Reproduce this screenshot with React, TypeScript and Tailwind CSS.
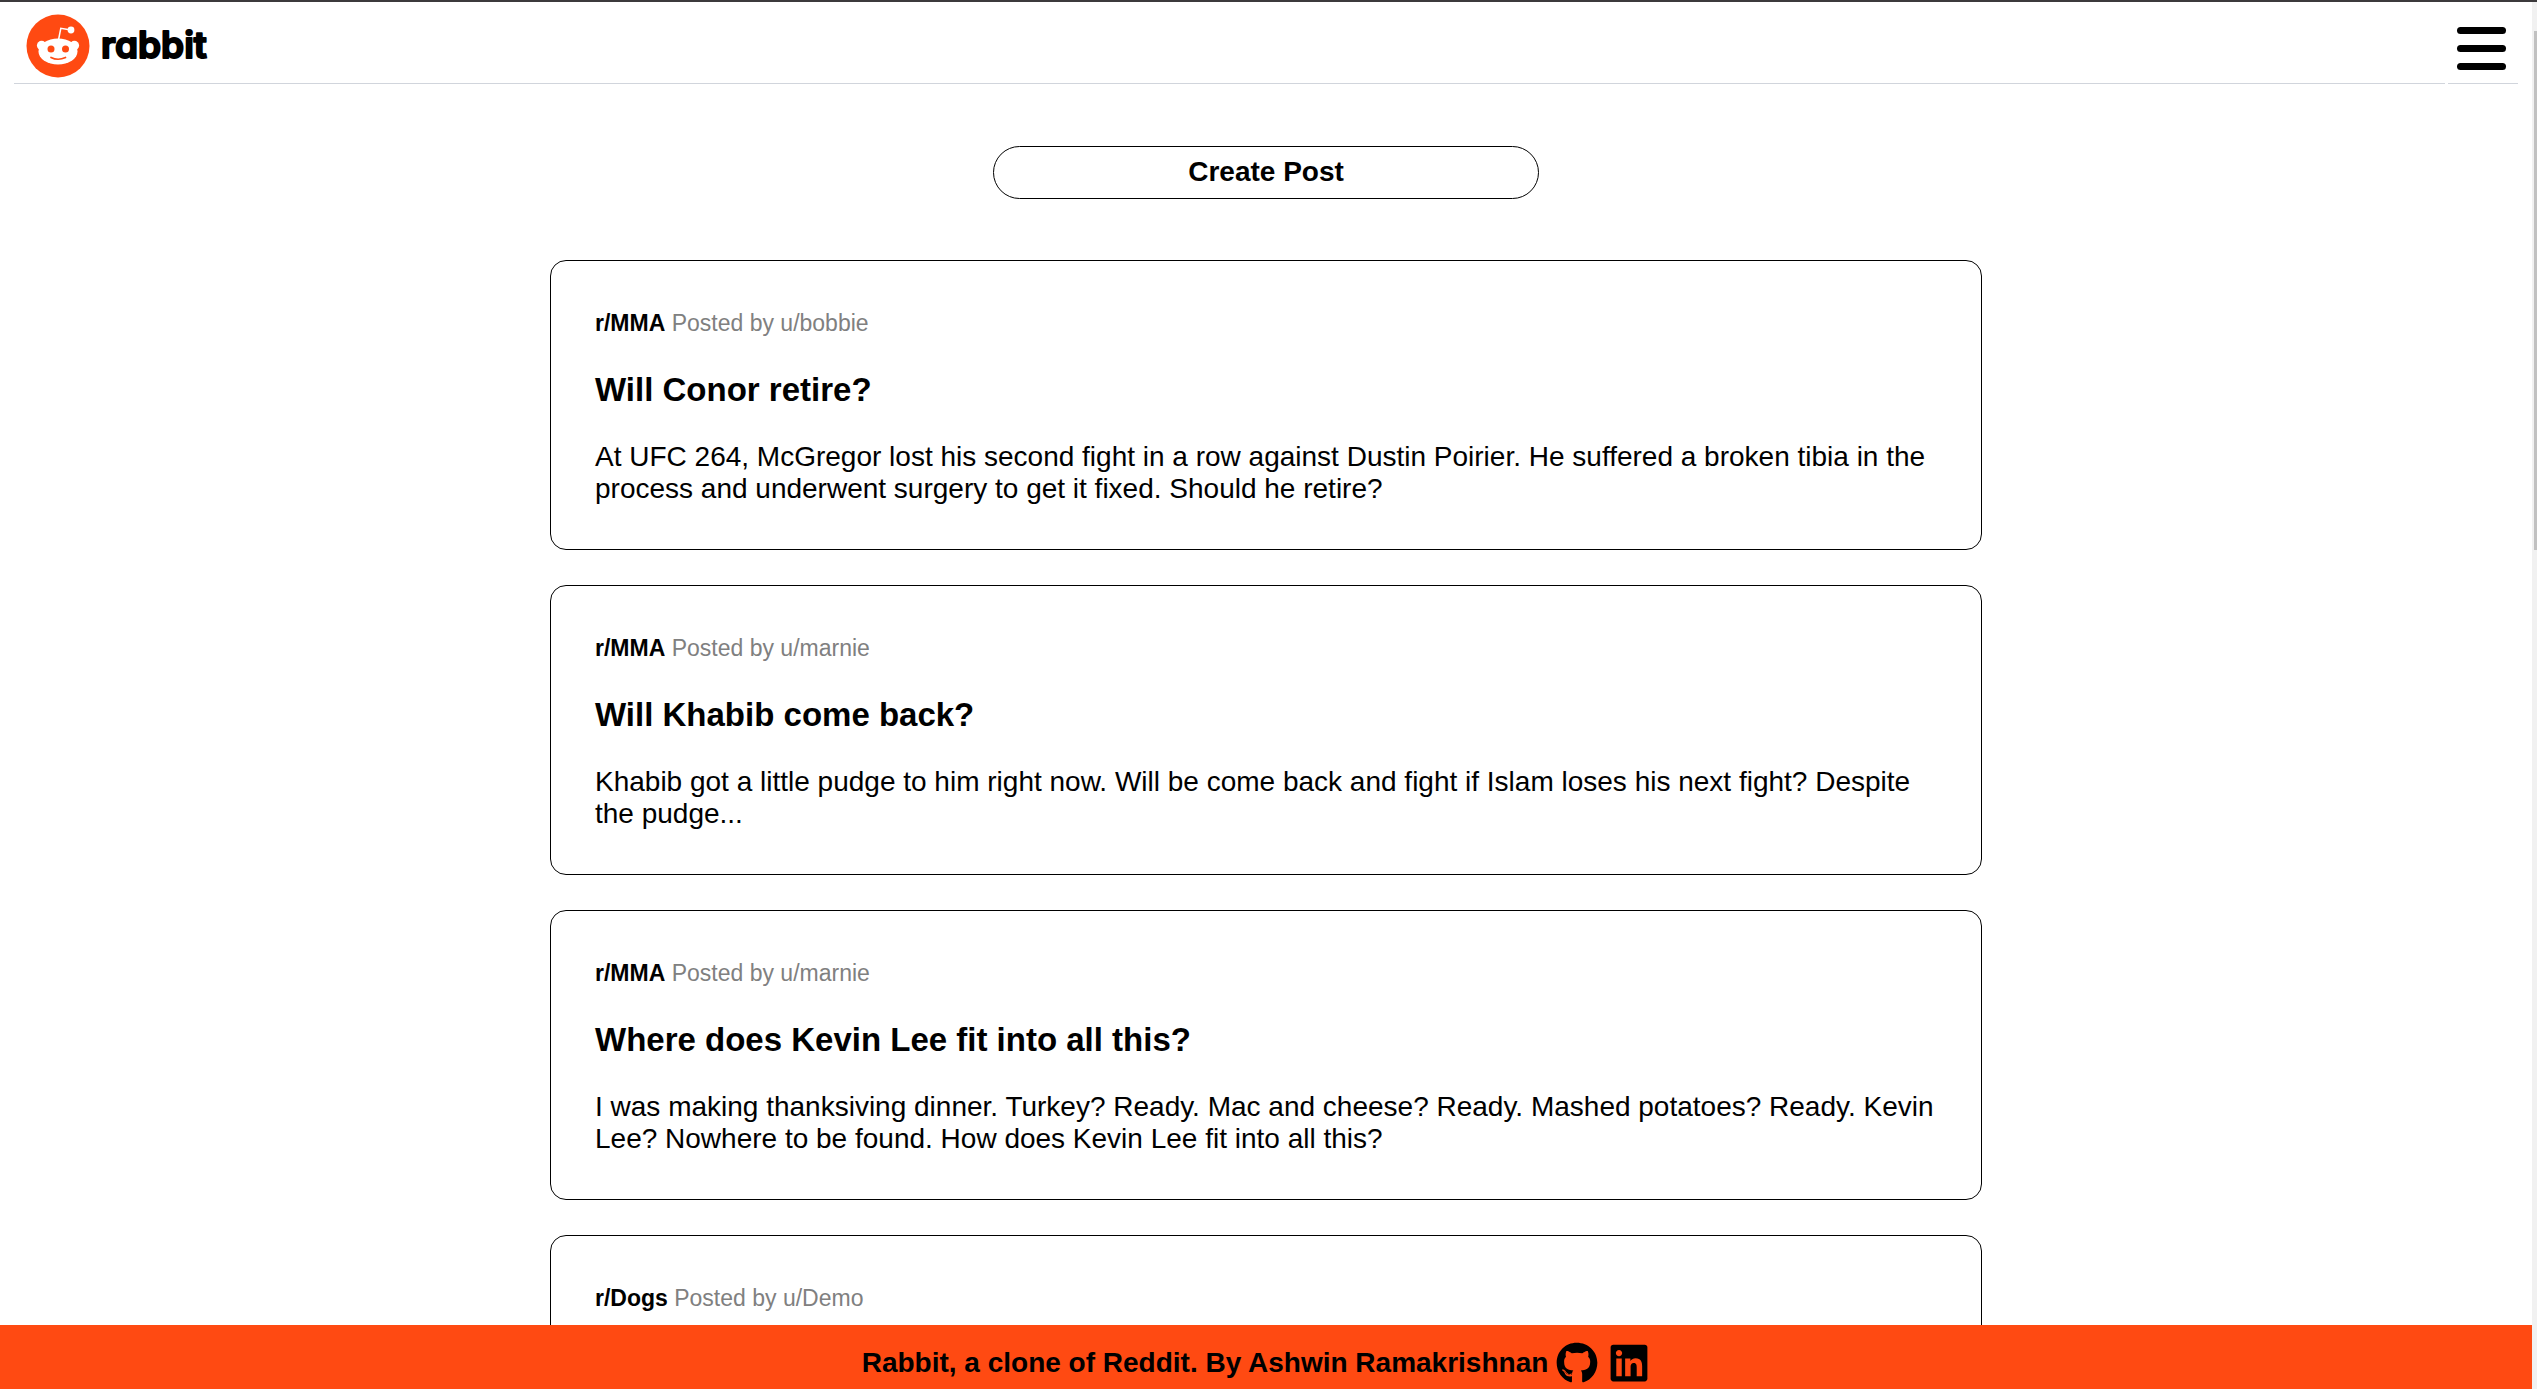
import { FaGithub, FaLinkedin } from "react-icons/fa";

type PostData = {
  community: string;
  author: string;
  title?: string;
  body?: string;
};

const posts: PostData[] = [
  {
    community: "r/MMA",
    author: "u/bobbie",
    title: "Will Conor retire?",
    body: "At UFC 264, McGregor lost his second fight in a row against Dustin Poirier. He suffered a broken tibia in the process and underwent surgery to get it fixed. Should he retire?",
  },
  {
    community: "r/MMA",
    author: "u/marnie",
    title: "Will Khabib come back?",
    body: "Khabib got a little pudge to him right now. Will be come back and fight if Islam loses his next fight? Despite the pudge...",
  },
  {
    community: "r/MMA",
    author: "u/marnie",
    title: "Where does Kevin Lee fit into all this?",
    body: "I was making thanksiving dinner. Turkey? Ready. Mac and cheese? Ready. Mashed potatoes? Ready. Kevin Lee? Nowhere to be found. How does Kevin Lee fit into all this?",
  },
  { community: "r/Dogs", author: "u/Demo" },
];

function RabbitMark() {
  return (
    <svg viewBox="0 0 64 64" className="size-16" aria-hidden="true">
      <circle cx="32" cy="32" r="31.5" fill="#ff4a12" />
      <path d="M32.500 26 L34.800 14.300 L45 16" fill="none" stroke="#fff" strokeWidth="1.5" />
      <circle cx="45" cy="16" r="3.4" fill="#fff" />
      <circle cx="15.600" cy="31.500" r="4.700" fill="#fff" />
      <circle cx="48.400" cy="31.500" r="4.700" fill="#fff" />
      <ellipse cx="32" cy="37.500" rx="19.500" ry="13" fill="#fff" />
      <circle cx="25" cy="35" r="3.5" fill="#ff4a12" />
      <circle cx="39.500" cy="35" r="3.5" fill="#ff4a12" />
      <path d="M25 43.500 Q32 47 39.500 43.500" fill="none" stroke="#ff4a12" strokeWidth="1.7" strokeLinecap="round" />
    </svg>
  );
}

function Header() {
  return (
    <header className="flex h-[82px] gap-[3px] px-3.5">
      <div className="flex flex-1 items-center border-b border-gray-300 pt-1.5 pl-3">
        <a href="#" className="flex items-center gap-2.5">
          <RabbitMark />
          <svg width="120" height="56" aria-label="rabbit">
            <text
              x="1"
              y="40"
              className="fill-black stroke-black stroke-2 font-['Inter',sans-serif] text-[37px] font-semibold [font-feature-settings:'cv11'] [stroke-linejoin:round]"
            >
              rabbit
            </text>
          </svg>
        </a>
      </div>
      <div className="flex w-[70px] items-center justify-center border-b border-gray-300 pt-3 pr-1">
        <button type="button" aria-label="Menu" className="flex flex-col gap-[11px]">
          <span className="h-[7px] w-[49px] rounded-full bg-black" />
          <span className="h-[7px] w-[49px] rounded-full bg-black" />
          <span className="h-[7px] w-[49px] rounded-full bg-black" />
        </button>
      </div>
    </header>
  );
}

function Post({ post }: { post: PostData }) {
  return (
    <article className="rounded-2xl border border-black px-11 pt-[46px] pb-11">
      <p className="text-[23px] leading-8">
        <a href="#" className="font-bold">{post.community}</a>{" "}
        <span className="text-[#808080]">Posted by {post.author}</span>
      </p>
      {post.title && <h2 className="mt-8 text-[33px] leading-[38px] font-bold">{post.title}</h2>}
      {post.body && <p className="mt-8 text-[28px] leading-8">{post.body}</p>}
    </article>
  );
}

export default function App() {
  return (
    <div className="flex h-screen overflow-hidden border-t-2 border-[#3c3a3c] bg-white font-['Liberation_Sans',Arial,sans-serif] text-black">
      <div className="flex min-w-0 flex-1 flex-col">
        <Header />
        <main className="mx-auto flex min-h-0 w-full max-w-[1432px] flex-1 flex-col items-center overflow-hidden pt-[62px]">
          <button type="button" className="h-[53px] w-full max-w-[546px] shrink-0 rounded-full border border-black pb-0.5 text-[28px] leading-8 font-bold">
            Create Post
          </button>
          <div className="mt-[61px] flex w-full flex-col gap-[35px]">
            {posts.map((post, index) => (
              <Post key={index} post={post} />
            ))}
          </div>
        </main>
        <footer className="flex h-16 shrink-0 items-center justify-center bg-[#ff4a12] pt-3 pr-5 text-[28px] leading-8 font-bold">
          <p>Rabbit, a clone of Reddit. By Ashwin Ramakrishnan</p>
          <a href="#" aria-label="GitHub" className="ml-2"><FaGithub className="size-[42px]" /></a>
          <a href="#" aria-label="LinkedIn" className="ml-2.5"><FaLinkedin className="size-[42px]" /></a>
        </footer>
      </div>
      <div className="w-[5px] shrink-0 bg-[#f1f1f1] pt-[29px] pl-0.5" aria-hidden="true">
        <div className="h-[519px] bg-[#c1c1c1]" />
      </div>
    </div>
  );
}
